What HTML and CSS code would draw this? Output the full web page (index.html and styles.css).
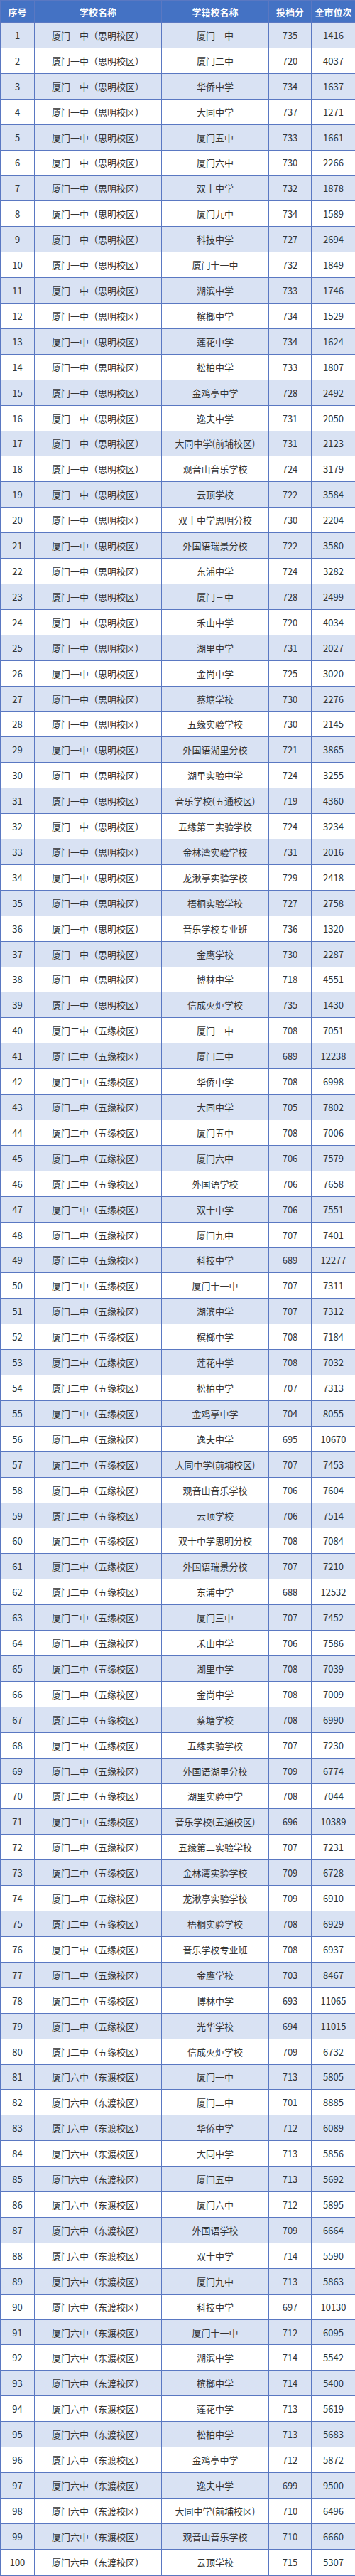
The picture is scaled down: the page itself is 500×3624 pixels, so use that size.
FILE: index.html
```html
<!DOCTYPE html>
<html lang="zh-CN">
<head>
<meta charset="utf-8">
<title>厦门中考投档分</title>
<link rel="stylesheet" href="styles.css">
</head>
<body>
<table class="score-table">
<colgroup>
<col class="c-no"><col class="c-school"><col class="c-origin"><col class="c-score"><col class="c-rank">
</colgroup>
<thead>
<tr><th>序号</th><th>学校名称</th><th>学籍校名称</th><th>投档分</th><th>全市位次</th></tr>
</thead>
<tbody>
<tr><td>1</td><td>厦门一中（思明校区）</td><td>厦门一中</td><td>735</td><td>1416</td></tr>
<tr><td>2</td><td>厦门一中（思明校区）</td><td>厦门二中</td><td>720</td><td>4037</td></tr>
<tr><td>3</td><td>厦门一中（思明校区）</td><td>华侨中学</td><td>734</td><td>1637</td></tr>
<tr><td>4</td><td>厦门一中（思明校区）</td><td>大同中学</td><td>737</td><td>1271</td></tr>
<tr><td>5</td><td>厦门一中（思明校区）</td><td>厦门五中</td><td>733</td><td>1661</td></tr>
<tr><td>6</td><td>厦门一中（思明校区）</td><td>厦门六中</td><td>730</td><td>2266</td></tr>
<tr><td>7</td><td>厦门一中（思明校区）</td><td>双十中学</td><td>732</td><td>1878</td></tr>
<tr><td>8</td><td>厦门一中（思明校区）</td><td>厦门九中</td><td>734</td><td>1589</td></tr>
<tr><td>9</td><td>厦门一中（思明校区）</td><td>科技中学</td><td>727</td><td>2694</td></tr>
<tr><td>10</td><td>厦门一中（思明校区）</td><td>厦门十一中</td><td>732</td><td>1849</td></tr>
<tr><td>11</td><td>厦门一中（思明校区）</td><td>湖滨中学</td><td>733</td><td>1746</td></tr>
<tr><td>12</td><td>厦门一中（思明校区）</td><td>槟榔中学</td><td>734</td><td>1529</td></tr>
<tr><td>13</td><td>厦门一中（思明校区）</td><td>莲花中学</td><td>734</td><td>1624</td></tr>
<tr><td>14</td><td>厦门一中（思明校区）</td><td>松柏中学</td><td>733</td><td>1807</td></tr>
<tr><td>15</td><td>厦门一中（思明校区）</td><td>金鸡亭中学</td><td>728</td><td>2492</td></tr>
<tr><td>16</td><td>厦门一中（思明校区）</td><td>逸夫中学</td><td>731</td><td>2050</td></tr>
<tr><td>17</td><td>厦门一中（思明校区）</td><td>大同中学(前埔校区)</td><td>731</td><td>2123</td></tr>
<tr><td>18</td><td>厦门一中（思明校区）</td><td>观音山音乐学校</td><td>724</td><td>3179</td></tr>
<tr><td>19</td><td>厦门一中（思明校区）</td><td>云顶学校</td><td>722</td><td>3584</td></tr>
<tr><td>20</td><td>厦门一中（思明校区）</td><td>双十中学思明分校</td><td>730</td><td>2204</td></tr>
<tr><td>21</td><td>厦门一中（思明校区）</td><td>外国语瑞景分校</td><td>722</td><td>3580</td></tr>
<tr><td>22</td><td>厦门一中（思明校区）</td><td>东浦中学</td><td>724</td><td>3282</td></tr>
<tr><td>23</td><td>厦门一中（思明校区）</td><td>厦门三中</td><td>728</td><td>2499</td></tr>
<tr><td>24</td><td>厦门一中（思明校区）</td><td>禾山中学</td><td>720</td><td>4034</td></tr>
<tr><td>25</td><td>厦门一中（思明校区）</td><td>湖里中学</td><td>731</td><td>2027</td></tr>
<tr><td>26</td><td>厦门一中（思明校区）</td><td>金尚中学</td><td>725</td><td>3020</td></tr>
<tr><td>27</td><td>厦门一中（思明校区）</td><td>蔡塘学校</td><td>730</td><td>2276</td></tr>
<tr><td>28</td><td>厦门一中（思明校区）</td><td>五缘实验学校</td><td>730</td><td>2145</td></tr>
<tr><td>29</td><td>厦门一中（思明校区）</td><td>外国语湖里分校</td><td>721</td><td>3865</td></tr>
<tr><td>30</td><td>厦门一中（思明校区）</td><td>湖里实验中学</td><td>724</td><td>3255</td></tr>
<tr><td>31</td><td>厦门一中（思明校区）</td><td>音乐学校(五通校区)</td><td>719</td><td>4360</td></tr>
<tr><td>32</td><td>厦门一中（思明校区）</td><td>五缘第二实验学校</td><td>724</td><td>3234</td></tr>
<tr><td>33</td><td>厦门一中（思明校区）</td><td>金林湾实验学校</td><td>731</td><td>2016</td></tr>
<tr><td>34</td><td>厦门一中（思明校区）</td><td>龙湫亭实验学校</td><td>729</td><td>2418</td></tr>
<tr><td>35</td><td>厦门一中（思明校区）</td><td>梧桐实验学校</td><td>727</td><td>2758</td></tr>
<tr><td>36</td><td>厦门一中（思明校区）</td><td>音乐学校专业班</td><td>736</td><td>1320</td></tr>
<tr><td>37</td><td>厦门一中（思明校区）</td><td>金鹰学校</td><td>730</td><td>2287</td></tr>
<tr><td>38</td><td>厦门一中（思明校区）</td><td>博林中学</td><td>718</td><td>4551</td></tr>
<tr><td>39</td><td>厦门一中（思明校区）</td><td>信成火炬学校</td><td>735</td><td>1430</td></tr>
<tr><td>40</td><td>厦门二中（五缘校区）</td><td>厦门一中</td><td>708</td><td>7051</td></tr>
<tr><td>41</td><td>厦门二中（五缘校区）</td><td>厦门二中</td><td>689</td><td>12238</td></tr>
<tr><td>42</td><td>厦门二中（五缘校区）</td><td>华侨中学</td><td>708</td><td>6998</td></tr>
<tr><td>43</td><td>厦门二中（五缘校区）</td><td>大同中学</td><td>705</td><td>7802</td></tr>
<tr><td>44</td><td>厦门二中（五缘校区）</td><td>厦门五中</td><td>708</td><td>7006</td></tr>
<tr><td>45</td><td>厦门二中（五缘校区）</td><td>厦门六中</td><td>706</td><td>7579</td></tr>
<tr><td>46</td><td>厦门二中（五缘校区）</td><td>外国语学校</td><td>706</td><td>7658</td></tr>
<tr><td>47</td><td>厦门二中（五缘校区）</td><td>双十中学</td><td>706</td><td>7551</td></tr>
<tr><td>48</td><td>厦门二中（五缘校区）</td><td>厦门九中</td><td>707</td><td>7401</td></tr>
<tr><td>49</td><td>厦门二中（五缘校区）</td><td>科技中学</td><td>689</td><td>12277</td></tr>
<tr><td>50</td><td>厦门二中（五缘校区）</td><td>厦门十一中</td><td>707</td><td>7311</td></tr>
<tr><td>51</td><td>厦门二中（五缘校区）</td><td>湖滨中学</td><td>707</td><td>7312</td></tr>
<tr><td>52</td><td>厦门二中（五缘校区）</td><td>槟榔中学</td><td>708</td><td>7184</td></tr>
<tr><td>53</td><td>厦门二中（五缘校区）</td><td>莲花中学</td><td>708</td><td>7032</td></tr>
<tr><td>54</td><td>厦门二中（五缘校区）</td><td>松柏中学</td><td>707</td><td>7313</td></tr>
<tr><td>55</td><td>厦门二中（五缘校区）</td><td>金鸡亭中学</td><td>704</td><td>8055</td></tr>
<tr><td>56</td><td>厦门二中（五缘校区）</td><td>逸夫中学</td><td>695</td><td>10670</td></tr>
<tr><td>57</td><td>厦门二中（五缘校区）</td><td>大同中学(前埔校区)</td><td>707</td><td>7453</td></tr>
<tr><td>58</td><td>厦门二中（五缘校区）</td><td>观音山音乐学校</td><td>706</td><td>7604</td></tr>
<tr><td>59</td><td>厦门二中（五缘校区）</td><td>云顶学校</td><td>706</td><td>7514</td></tr>
<tr><td>60</td><td>厦门二中（五缘校区）</td><td>双十中学思明分校</td><td>708</td><td>7084</td></tr>
<tr><td>61</td><td>厦门二中（五缘校区）</td><td>外国语瑞景分校</td><td>707</td><td>7210</td></tr>
<tr><td>62</td><td>厦门二中（五缘校区）</td><td>东浦中学</td><td>688</td><td>12532</td></tr>
<tr><td>63</td><td>厦门二中（五缘校区）</td><td>厦门三中</td><td>707</td><td>7452</td></tr>
<tr><td>64</td><td>厦门二中（五缘校区）</td><td>禾山中学</td><td>706</td><td>7586</td></tr>
<tr><td>65</td><td>厦门二中（五缘校区）</td><td>湖里中学</td><td>708</td><td>7039</td></tr>
<tr><td>66</td><td>厦门二中（五缘校区）</td><td>金尚中学</td><td>708</td><td>7009</td></tr>
<tr><td>67</td><td>厦门二中（五缘校区）</td><td>蔡塘学校</td><td>708</td><td>6990</td></tr>
<tr><td>68</td><td>厦门二中（五缘校区）</td><td>五缘实验学校</td><td>707</td><td>7230</td></tr>
<tr><td>69</td><td>厦门二中（五缘校区）</td><td>外国语湖里分校</td><td>709</td><td>6774</td></tr>
<tr><td>70</td><td>厦门二中（五缘校区）</td><td>湖里实验中学</td><td>708</td><td>7044</td></tr>
<tr><td>71</td><td>厦门二中（五缘校区）</td><td>音乐学校(五通校区)</td><td>696</td><td>10389</td></tr>
<tr><td>72</td><td>厦门二中（五缘校区）</td><td>五缘第二实验学校</td><td>707</td><td>7231</td></tr>
<tr><td>73</td><td>厦门二中（五缘校区）</td><td>金林湾实验学校</td><td>709</td><td>6728</td></tr>
<tr><td>74</td><td>厦门二中（五缘校区）</td><td>龙湫亭实验学校</td><td>709</td><td>6910</td></tr>
<tr><td>75</td><td>厦门二中（五缘校区）</td><td>梧桐实验学校</td><td>708</td><td>6929</td></tr>
<tr><td>76</td><td>厦门二中（五缘校区）</td><td>音乐学校专业班</td><td>708</td><td>6937</td></tr>
<tr><td>77</td><td>厦门二中（五缘校区）</td><td>金鹰学校</td><td>703</td><td>8467</td></tr>
<tr><td>78</td><td>厦门二中（五缘校区）</td><td>博林中学</td><td>693</td><td>11065</td></tr>
<tr><td>79</td><td>厦门二中（五缘校区）</td><td>光华学校</td><td>694</td><td>11015</td></tr>
<tr><td>80</td><td>厦门二中（五缘校区）</td><td>信成火炬学校</td><td>709</td><td>6732</td></tr>
<tr><td>81</td><td>厦门六中（东渡校区）</td><td>厦门一中</td><td>713</td><td>5805</td></tr>
<tr><td>82</td><td>厦门六中（东渡校区）</td><td>厦门二中</td><td>701</td><td>8885</td></tr>
<tr><td>83</td><td>厦门六中（东渡校区）</td><td>华侨中学</td><td>712</td><td>6089</td></tr>
<tr><td>84</td><td>厦门六中（东渡校区）</td><td>大同中学</td><td>713</td><td>5856</td></tr>
<tr><td>85</td><td>厦门六中（东渡校区）</td><td>厦门五中</td><td>713</td><td>5692</td></tr>
<tr><td>86</td><td>厦门六中（东渡校区）</td><td>厦门六中</td><td>712</td><td>5895</td></tr>
<tr><td>87</td><td>厦门六中（东渡校区）</td><td>外国语学校</td><td>709</td><td>6664</td></tr>
<tr><td>88</td><td>厦门六中（东渡校区）</td><td>双十中学</td><td>714</td><td>5590</td></tr>
<tr><td>89</td><td>厦门六中（东渡校区）</td><td>厦门九中</td><td>713</td><td>5863</td></tr>
<tr><td>90</td><td>厦门六中（东渡校区）</td><td>科技中学</td><td>697</td><td>10130</td></tr>
<tr><td>91</td><td>厦门六中（东渡校区）</td><td>厦门十一中</td><td>712</td><td>6095</td></tr>
<tr><td>92</td><td>厦门六中（东渡校区）</td><td>湖滨中学</td><td>714</td><td>5542</td></tr>
<tr><td>93</td><td>厦门六中（东渡校区）</td><td>槟榔中学</td><td>714</td><td>5400</td></tr>
<tr><td>94</td><td>厦门六中（东渡校区）</td><td>莲花中学</td><td>713</td><td>5619</td></tr>
<tr><td>95</td><td>厦门六中（东渡校区）</td><td>松柏中学</td><td>713</td><td>5683</td></tr>
<tr><td>96</td><td>厦门六中（东渡校区）</td><td>金鸡亭中学</td><td>712</td><td>5872</td></tr>
<tr><td>97</td><td>厦门六中（东渡校区）</td><td>逸夫中学</td><td>699</td><td>9500</td></tr>
<tr><td>98</td><td>厦门六中（东渡校区）</td><td>大同中学(前埔校区)</td><td>710</td><td>6496</td></tr>
<tr><td>99</td><td>厦门六中（东渡校区）</td><td>观音山音乐学校</td><td>710</td><td>6660</td></tr>
<tr><td>100</td><td>厦门六中（东渡校区）</td><td>云顶学校</td><td>715</td><td>5307</td></tr>
</tbody>
</table>
</body>
</html>
```

FILE: styles.css
```css
html, body {
  margin: 0;
  padding: 0;
  background: #ffffff;
}

.score-table {
  width: 500px;
  height: 3624px;
  border-collapse: collapse;
  table-layout: fixed;
  font-family: "Noto Sans CJK SC", "Noto Sans", sans-serif;
  font-size: 13px;
  color: #333333;
}

.c-no { width: 48px; }
.c-school { width: 179px; }
.c-origin { width: 151px; }
.c-score { width: 60px; }
.c-rank { width: 62px; }

.score-table th,
.score-table td {
  border: 1px solid #5a78c2;
  padding: 0;
  height: 30px;
  text-align: center;
  vertical-align: middle;
  white-space: nowrap;
  line-height: 1;
}

.score-table th {
  background: #4472c4;
  color: #ffffff;
  font-weight: 700;
  font-size: 13px;
}

.score-table tbody tr:nth-child(odd) td {
  background: #d9e2f3;
}

.score-table tbody tr:nth-child(even) td {
  background: #ffffff;
}
```
